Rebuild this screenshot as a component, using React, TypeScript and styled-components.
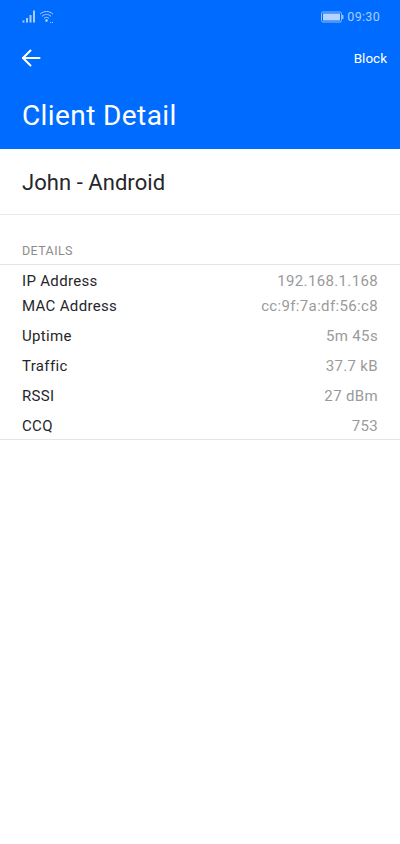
import React from "react";
import styled, { createGlobalStyle } from "styled-components";

const details = [
  { label: "IP Address", value: "192.168.1.168", pull: 0 },
  { label: "MAC Address", value: "cc:9f:7a:df:56:c8", pull: 5 },
  { label: "Uptime", value: "5m 45s", pull: 0 },
  { label: "Traffic", value: "37.7 kB", pull: 0 },
  { label: "RSSI", value: "27 dBm", pull: 0 },
  { label: "CCQ", value: "753", pull: 0 },
];

const App: React.FC = () => {
  return (
    <Page>
      <GlobalStyle />
      <Header>
        <StatusBar>
          <SignalGroup>
            <svg width="15" height="13" viewBox="0 0 15 13" fill="#a9ccff">
              <rect x="0.5" y="10.5" width="2" height="2" />
              <rect x="4" y="8" width="2" height="4.5" />
              <rect x="7.5" y="5" width="2" height="7.5" />
              <rect x="11" y="0.5" width="2" height="12" />
            </svg>
            <svg width="16" height="14" viewBox="0 0 16 14" fill="none" stroke="#a9ccff" strokeWidth="1">
              <path d="M1 4.2C4.8 .6 10.2 .6 14 4.2" />
              <path d="M3 6.3C5.8 3.8 9.2 3.8 12 6.3" />
              <path d="M5 8.4C6.7 7 8.3 7 10 8.4" />
              <circle cx="7.5" cy="10.5" r="1" fill="#a9ccff" />
              <path d="M11 12.5h4" strokeDasharray="1 1" />
            </svg>
          </SignalGroup>
          <ClockGroup>
            <svg width="23" height="12" viewBox="0 0 23 12">
              <rect x="0.5" y="1" width="20" height="10" rx="1.5" fill="none" stroke="#8fbcff" />
              <rect x="2" y="2.5" width="17" height="7" fill="#b5d3ff" />
              <rect x="21" y="4" width="1.5" height="4" fill="#8fbcff" />
            </svg>
            <StatusTime>09:30</StatusTime>
          </ClockGroup>
        </StatusBar>
        <NavBar>
          <BackButton aria-label="Back">
            <svg width="20" height="18" viewBox="0 0 20 18" fill="none" stroke="#fff" strokeWidth="2" strokeLinecap="round" strokeLinejoin="round">
              <path d="M18.5 9H2" />
              <path d="M9.5 1.5L2 9l7.5 7.5" />
            </svg>
          </BackButton>
          <BlockButton>Block</BlockButton>
        </NavBar>
        <PageTitle>Client Detail</PageTitle>
      </Header>
      <ClientName>John - Android</ClientName>
      <SectionTitle>DETAILS</SectionTitle>
      <DetailList>
        {details.map((item) => (
          <DetailRow key={item.label} $pull={item.pull}>
            <DetailLabel>{item.label}</DetailLabel>
            <DetailValue>{item.value}</DetailValue>
          </DetailRow>
        ))}
      </DetailList>
    </Page>
  );
};

export default App;

const GlobalStyle = createGlobalStyle`
  html, body {
    margin: 0;
    padding: 0;
    background: #fff;
  }
`;

const Page = styled.div`
  width: 400px;
  height: 844px;
  overflow: hidden;
  background: #fff;
  font-family: Roboto, "Liberation Sans", sans-serif;
`;

const Header = styled.header`
  height: 149px;
  background: #006cff;
  display: flex;
  flex-direction: column;
`;

const StatusBar = styled.div`
  height: 33px;
  padding: 0 20px 0 22px;
  display: flex;
  justify-content: space-between;
  align-items: center;
`;

const SignalGroup = styled.div`
  display: flex;
  align-items: center;
  gap: 2px;
`;

const ClockGroup = styled.div`
  display: flex;
  align-items: center;
  gap: 3px;
`;

const StatusTime = styled.span`
  font-size: 12.5px;
  color: #a9ccff;
  letter-spacing: 0.3px;
`;

const NavBar = styled.div`
  height: 50px;
  padding: 0 13px 0 21px;
  display: flex;
  justify-content: space-between;
  align-items: center;
`;

const BackButton = styled.button`
  padding: 0;
  background: none;
  border: none;
  display: flex;
`;

const BlockButton = styled.button`
  padding: 0;
  background: none;
  border: none;
  color: #fff;
  font-family: inherit;
  font-size: 13.5px;
`;

const PageTitle = styled.h1`
  margin: 15px 0 0 22px;
  color: #fff;
  font-size: 28px;
  line-height: 36px;
  font-weight: 400;
  letter-spacing: 0.4px;
`;

const ClientName = styled.div`
  height: 66px;
  padding: 2px 0 0 22px;
  display: flex;
  align-items: center;
  box-sizing: border-box;
  border-bottom: 1px solid #e8e8e8;
  color: #26262b;
  font-size: 22px;
  letter-spacing: 0.05px;
`;

const SectionTitle = styled.div`
  height: 50px;
  padding: 0 22px 6px;
  display: flex;
  align-items: flex-end;
  box-sizing: border-box;
  border-bottom: 1px solid #e4e4e4;
  color: #8c8c8c;
  font-size: 12.5px;
  letter-spacing: 0.4px;
`;

const DetailList = styled.div`
  height: 175px;
  box-sizing: border-box;
  border-bottom: 1px solid #e4e4e4;
`;

const DetailRow = styled.div<{ $pull: number }>`
  height: 30px;
  box-sizing: border-box;
  margin-top: ${({ $pull }) => -$pull}px;
  padding: 2px 22px 0;
  display: flex;
  justify-content: space-between;
  align-items: center;
`;

const DetailLabel = styled.span`
  color: #26262b;
  font-size: 15px;
  letter-spacing: 0.33px;
`;

const DetailValue = styled.span`
  color: #9a9a9a;
  font-size: 15px;
  letter-spacing: 0.35px;
`;
